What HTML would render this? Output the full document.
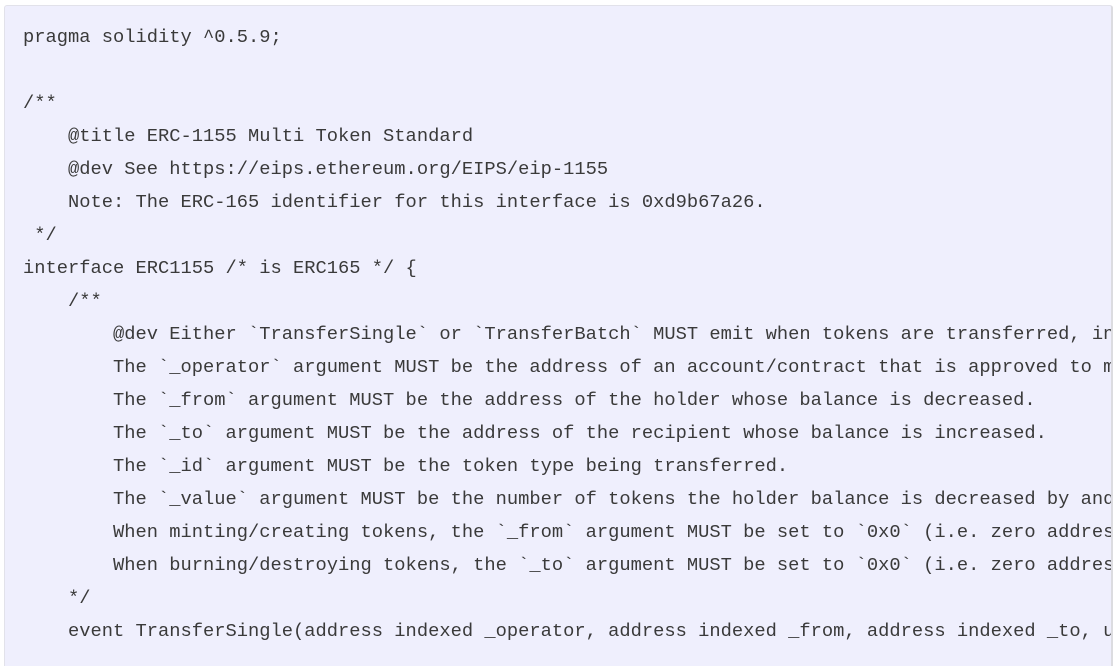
<!DOCTYPE html>
<html><head><meta charset="utf-8"><style>
html,body{margin:0;padding:0;background:#fff;width:1120px;height:665px;overflow:hidden}
.box{position:absolute;left:4px;top:5px;width:1106px;height:660px;background:#efeffd;border:1px solid #e2e2ea;border-bottom:none;border-right:2px solid #dcdce0;border-radius:3px 3px 0 0;overflow:hidden}
pre{margin:0;padding:15px 0 0 18px;font-family:"Liberation Mono",monospace;font-size:18.75px;line-height:33px;color:#3a3a3a;white-space:pre}
</style></head><body><div class="box"><pre>pragma solidity ^0.5.9;

/**
    @title ERC-1155 Multi Token Standard
    @dev See https://eips.ethereum.org/EIPS/eip-1155
    Note: The ERC-165 identifier for this interface is 0xd9b67a26.
 */
interface ERC1155 /* is ERC165 */ {
    /**
        @dev Either `TransferSingle` or `TransferBatch` MUST emit when tokens are transferred, including
        The `_operator` argument MUST be the address of an account/contract that is approved to make
        The `_from` argument MUST be the address of the holder whose balance is decreased.
        The `_to` argument MUST be the address of the recipient whose balance is increased.
        The `_id` argument MUST be the token type being transferred.
        The `_value` argument MUST be the number of tokens the holder balance is decreased by and
        When minting/creating tokens, the `_from` argument MUST be set to `0x0` (i.e. zero address).
        When burning/destroying tokens, the `_to` argument MUST be set to `0x0` (i.e. zero address).
    */
    event TransferSingle(address indexed _operator, address indexed _from, address indexed _to, uint256 _id, uint256 _value);
</pre></div></body></html>
